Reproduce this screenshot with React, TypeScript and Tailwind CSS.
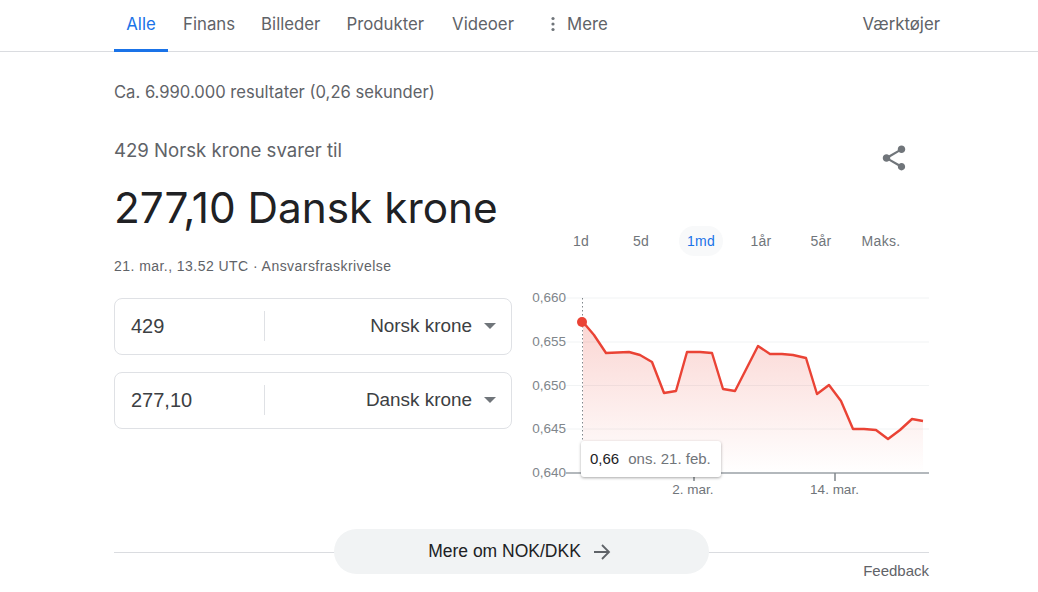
const tabs = [
  { label: "Finans", cls: "ml-[15px]" },
  { label: "Billeder", cls: "ml-[26px]" },
  { label: "Produkter", cls: "ml-[26px]" },
  { label: "Videoer", cls: "ml-[28px]" },
];

const ranges = ["1d", "5d", "1md", "1år", "5år", "Maks."];

const points =
  "583,322 594,335 606,353 629,352 640,355 652,362 664,393 676,391 687,352 700,352 712,353 723,389 735,391 758,346 770,354 782,354 793,355 806,358 817,394 829,385 841,401 853,429 864,429 876,430 888,439 900,430 912,419 923,421";

function Caret() {
  return <span className="h-0 w-0 border-x-[6px] border-t-[6px] border-x-transparent border-t-[#70757a]" />;
}

function Converter({ value, unit }: { value: string; unit: string }) {
  return (
    <div className="flex h-[57px] items-center rounded-lg border border-[#dfe1e5] pb-[1px] pl-4 pr-[15px] text-[#3c4043]">
      <span className="w-[133px] text-[20px]">{value}</span>
      <span className="h-[30px] w-px bg-[#dfe1e5]" />
      <span className="flex-1 text-right text-[18.9px]">{unit}</span>
      <span className="ml-3 flex">
        <Caret />
      </span>
    </div>
  );
}

function Chart() {
  return (
    <svg viewBox="523 288 407 212" className="block h-[212px] w-[407px]" fontFamily="'Liberation Sans', Arial, sans-serif">
      <defs>
        <linearGradient id="fill" x1="0" y1="0" x2="0" y2="1">
          <stop offset="0" stopColor="#ea4335" stopOpacity="0.22" />
          <stop offset="1" stopColor="#ea4335" stopOpacity="0" />
        </linearGradient>
      </defs>
      {[298, 342, 385.5, 429].map((y) => (
        <line key={y} x1="566" x2="929" y1={y} y2={y} stroke="#f1f3f4" />
      ))}
      {[
        ["0,660", 302],
        ["0,655", 346],
        ["0,650", 390],
        ["0,645", 433],
        ["0,640", 477],
      ].map(([t, y]) => (
        <text key={t} x="566" y={y} textAnchor="end" fontSize="13.5" fill="#80868b">
          {t}
        </text>
      ))}
      <polygon points={`583,322 ${points} 923,473 583,473`} fill="url(#fill)" />
      <line x1="582.5" x2="582.5" y1="298" y2="473" stroke="#80868b" strokeDasharray="1.5 2.5" />
      <polyline points={points} fill="none" stroke="#ea4335" strokeWidth="2.4" strokeLinejoin="round" />
      <circle cx="582" cy="322" r="5" fill="#ea4335" />
      <line x1="566" x2="929" y1="473" y2="473" stroke="#9aa0a6" strokeWidth="1.5" />
      <line x1="694" x2="694" y1="473" y2="481" stroke="#80868b" strokeWidth="1.5" />
      <line x1="835" x2="835" y1="473" y2="481" stroke="#80868b" strokeWidth="1.5" />
      <text x="693" y="494" textAnchor="middle" fontSize="13.5" fill="#70757a">
        2. mar.
      </text>
      <text x="834.5" y="494" textAnchor="middle" fontSize="13.5" fill="#70757a">
        14. mar.
      </text>
    </svg>
  );
}

export default function App() {
  return (
    <div className="relative h-[592px] w-[1038px] overflow-hidden bg-white font-['Liberation_Sans',Arial,sans-serif]">
      <nav className="flex h-[52px] items-stretch border-b border-[#dadce0] pl-[114px] pr-[98px] font-['Inter',sans-serif] text-[16.8px] text-[#5f6368]">
        <a className="-mb-px flex w-[54px] justify-center border-b-[3px] border-[#1a73e8] pt-[12px] text-[#1a73e8]">Alle</a>
        {tabs.map((t) => (
          <a key={t.label} className={`${t.cls} pt-[12px]`}>
            {t.label}
          </a>
        ))}
        <a className="ml-[36px] flex items-start pt-[12px]">
          <svg width="6" height="16" viewBox="0 0 6 16" className="mr-[11px] mt-[4px]" fill="#70757a">
            <circle cx="3" cy="2.5" r="1.6" />
            <circle cx="3" cy="8" r="1.6" />
            <circle cx="3" cy="13.5" r="1.6" />
          </svg>
          Mere
        </a>
        <a className="ml-auto pt-[12px]">Værktøjer</a>
      </nav>

      <div className="pl-[114px] pt-[28px] font-['Inter',sans-serif] text-[16.6px] leading-[24px] text-[#5f6368]">
        Ca. 6.990.000 resultater (0,26 sekunder)
      </div>

      <div className="relative ml-[114px] w-[816px]">
        <div className="pt-[33px] font-['Inter',sans-serif] text-[18.6px] leading-[26px] text-[#5f6368]">429 Norsk krone svarer til</div>
        <div className="mt-[17px] font-['Inter',sans-serif] text-[42.3px] leading-[56px] text-[#202124]">277,10 Dansk krone</div>

        <svg viewBox="0 0 24 24" fill="#70757a" className="absolute right-[21px] top-[39px] h-[30px] w-[30px]">
          <path d="M18 16.08c-.76 0-1.44.3-1.96.77L8.91 12.7c.05-.23.09-.46.09-.7s-.04-.47-.09-.7l7.05-4.11c.54.5 1.25.81 2.04.81 1.66 0 3-1.34 3-3s-1.34-3-3-3-3 1.34-3 3c0 .24.04.47.09.7L8.04 9.81C7.5 9.31 6.79 9 6 9c-1.66 0-3 1.34-3 3s1.34 3 3 3c.79 0 1.5-.31 2.04-.81l7.12 4.16c-.05.21-.08.43-.08.65 0 1.61 1.31 2.92 2.92 2.92s2.92-1.31 2.92-2.92-1.31-2.92-2.92-2.92z" />
        </svg>

        <div className="mt-[20px] flex items-start">
          <div className="w-[398px]">
            <p className="text-[14px] leading-[20px] tracking-[0.45px] text-[#5f6368]">21. mar., 13.52 UTC · Ansvarsfraskrivelse</p>
            <div className="mt-[22px] flex flex-col gap-[17px]">
              <Converter value="429" unit="Norsk krone" />
              <Converter value="277,10" unit="Dansk krone" />
            </div>
          </div>

          <div className="relative -mt-[30px] ml-[11px] w-[407px]">
            <div className="flex h-[30px] items-center pl-[28px] text-[14px] tracking-[0.3px] text-[#70757a]">
              {ranges.map((r) => (
                <span key={r} className="flex w-[60px] justify-center">
                  {r === "1md" ? (
                    <span className="flex h-[30px] w-[44px] items-center justify-center rounded-[15px] bg-[#f8f9fa] text-[#1a73e8]">{r}</span>
                  ) : (
                    r
                  )}
                </span>
              ))}
            </div>
            <div className="mt-[32px]">
              <Chart />
            </div>
            <div className="absolute left-[58px] top-[215px] flex h-[36px] w-[140px] items-center whitespace-nowrap rounded-[3px] bg-white pl-[9px] text-[15px] shadow-[0_1px_3px_rgba(0,0,0,0.35)]">
              <span className="text-[#202124]">0,66</span>
              <span className="ml-[9px] text-[#70757a]">ons. 21. feb.</span>
            </div>
          </div>
        </div>
      </div>

      <div className="absolute left-[114px] right-[109px] top-[529px]">
        <div className="relative flex justify-center">
          <span className="absolute inset-x-0 top-[23px] h-px bg-[#dadce0]" />
          <button className="relative flex h-[45px] w-[375px] items-center justify-center rounded-[23px] bg-[#f1f3f4] pr-[4px] text-[17.5px] text-[#202124]">
            Mere om NOK/DKK
            <svg width="18" height="18" viewBox="0 0 18 18" fill="none" stroke="#5f6368" strokeWidth="1.8" className="ml-[12px]">
              <path d="M1 9h15M9 2l7 7-7 7" />
            </svg>
          </button>
        </div>
        <div className="-mt-[14px] text-right text-[15px] leading-[21px] text-[#5f6368]">Feedback</div>
      </div>
    </div>
  );
}
